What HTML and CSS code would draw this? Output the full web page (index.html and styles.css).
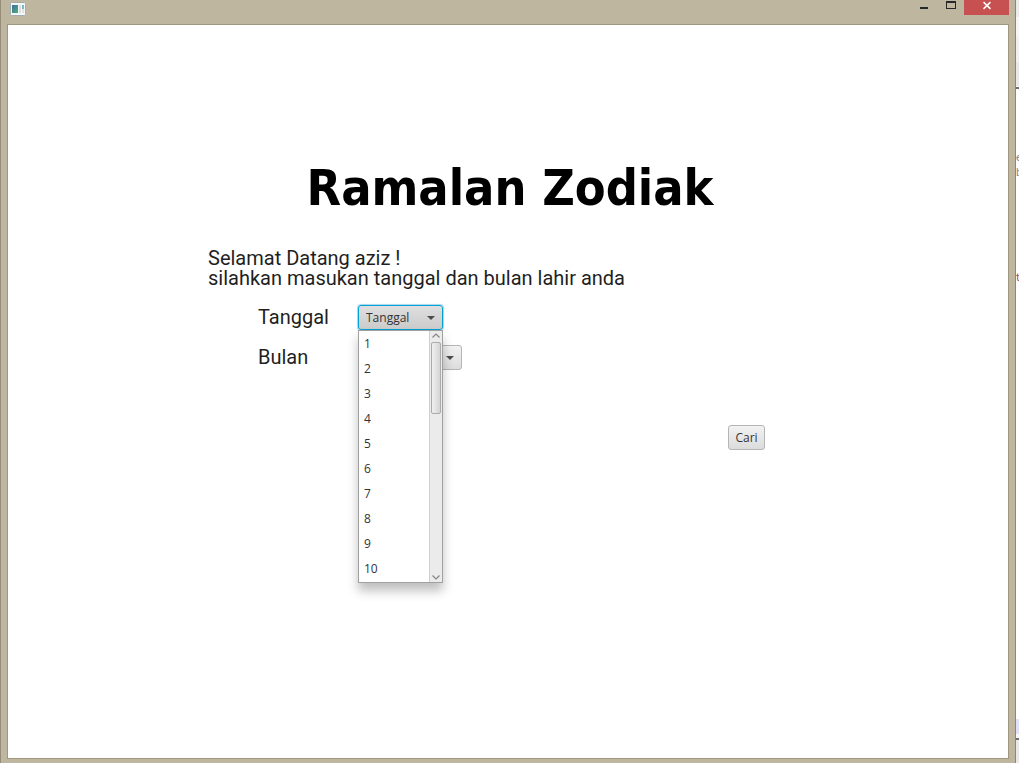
FILE: index.html
```html
<!DOCTYPE html>
<html lang="id">
<head>
<meta charset="utf-8">
<title>Ramalan Zodiak</title>
<link rel="stylesheet" href="styles.css">
</head>
<body>
<div class="desktop">
  <div class="window">
    <header class="titlebar">
      <svg class="app-icon" width="16" height="14" viewBox="0 0 16 14" aria-hidden="true">
        <defs>
          <linearGradient id="pane" x1="0" y1="0" x2="1" y2="1">
            <stop offset="0" stop-color="#3f6f9c"/><stop offset="1" stop-color="#4fae78"/>
          </linearGradient>
        </defs>
        <rect x=".5" y=".5" width="15" height="13" rx="1" fill="#f4f7f8" stroke="#a5acb0"/>
        <rect x="2" y="3" width="6" height="8" fill="url(#pane)"/>
        <rect x="9" y="3" width="2" height="8" fill="#dedede"/>
        <rect x="12" y="3" width="2" height="4" fill="#7fb4cf"/>
        <rect x="12" y="7" width="2" height="4" fill="#e2e2e2"/>
      </svg>
      <div class="window-buttons">
        <button class="window-button" type="button" aria-label="Minimize">
          <svg width="8" height="15" viewBox="0 0 8 15"><path d="M0 7h8v2H0z" fill="#26282a"/></svg>
        </button>
        <button class="window-button" type="button" aria-label="Maximize">
          <svg width="10" height="15" viewBox="0 0 10 15"><path d="M0 1h10v8H0zM1 3v5h8V3z" fill="#26282a" fill-rule="evenodd"/></svg>
        </button>
        <button class="window-button close" type="button" aria-label="Close">
          <svg width="8" height="15" viewBox="0 0 8 15"><path d="M.5 2.200l7 6.600M7.500 2.200l-7 6.600" stroke="#fff" stroke-width="1.6"/></svg>
        </button>
      </div>
    </header>
    <main class="scene">
      <h1 class="heading">Ramalan Zodiak</h1>
      <form class="form">
        <p class="intro">Selamat Datang aziz !<br>silahkan masukan tanggal dan bulan lahir anda</p>
        <div class="field">
          <label class="field-label" for="tanggal">Tanggal</label>
          <div class="combo combo-date focused">
            <select class="combo-select" id="tanggal"><option>Tanggal</option></select>
            <svg class="combo-arrow" width="8" height="4" viewBox="0 0 8 4"><path d="M0 0h8L4 4z" fill="#4c4c4c"/></svg>
            <div class="popup">
              <ul class="popup-list">
                <li>1</li><li>2</li><li>3</li><li>4</li><li>5</li>
                <li>6</li><li>7</li><li>8</li><li>9</li><li>10</li>
              </ul>
              <div class="scrollbar">
                <svg class="scroll-arrow" width="8" height="5" viewBox="0 0 8 5"><path d="M.5 4.500L4 1l3.500 3.500" fill="none" stroke="#858585" stroke-width="1.2"/></svg>
                <div class="scroll-track"><div class="scroll-thumb"></div></div>
                <svg class="scroll-arrow" width="8" height="5" viewBox="0 0 8 5"><path d="M.5 .5L4 4 7.500 .5" fill="none" stroke="#858585" stroke-width="1.2"/></svg>
              </div>
            </div>
          </div>
        </div>
        <div class="field">
          <label class="field-label" for="bulan">Bulan</label>
          <div class="combo combo-month">
            <select class="combo-select" id="bulan"><option>Bulan</option></select>
            <svg class="combo-arrow" width="8" height="4" viewBox="0 0 8 4"><path d="M0 0h8L4 4z" fill="#4c4c4c"/></svg>
          </div>
        </div>
        <div class="actions">
          <button class="search" type="button">Cari</button>
        </div>
      </form>
    </main>
  </div>
  <div class="behind" aria-hidden="true">
    <div class="behind-tools"></div>
    <div class="behind-page">
      <span>e</span><span>b</span><span class="code">t</span>
    </div>
    <div class="behind-tab"></div>
    <div class="behind-foot"></div>
  </div>
</div>
</body>
</html>
```
FILE: styles.css
```css
* { box-sizing: border-box; }

body {
  margin: 0;
  background: #fff;
  color: #1f1f1f;
  font-family: Roboto, "Noto Sans", sans-serif;
}

.desktop {
  display: flex;
  min-height: 100vh;
}

.window {
  flex: 1;
  display: flex;
  flex-direction: column;
  padding: 0 6px 4px;
  background: #bfb6a0;
  border-left: 1px solid #958d79;
  border-right: 1px solid #8d8674;
}

.titlebar {
  display: flex;
  justify-content: space-between;
  height: 24px;
  padding-left: 3px;
}

.app-icon { margin-top: 2px; }

.window-buttons { display: flex; height: 15px; }

.window-button {
  display: flex;
  justify-content: center;
  width: 27px;
  padding: 0;
  border: 0;
  background: none;
}

.window-button.close {
  width: 45px;
  background: #c75050;
}

.scene {
  flex: 1;
  padding-top: 130px;
  background: #fff;
  border: 1px solid #9f967f;
}

.heading {
  margin: 0 0 26px;
  padding-left: 4px;
  color: #000;
  font-family: "DejaVu Sans Condensed", "Noto Sans", sans-serif;
  font-size: 50px;
  line-height: 67px;
  text-align: center;
}

.form {
  width: 600px;
  max-width: 100%;
  margin: 0 auto;
}

.intro {
  margin: 0 0 17px;
  font-size: 20px;
  line-height: 20px;
}

.field {
  display: flex;
  align-items: center;
  margin-bottom: 15px;
  padding-left: 50px;
}

.field-label {
  width: 100px;
  font-size: 20px;
  line-height: 25px;
}

.combo {
  position: relative;
  height: 25px;
}

.combo-date { width: 85px; }
.combo-month { width: 104px; }

.combo-select,
.search {
  height: 25px;
  border: 1px solid #b5b5b5;
  border-radius: 3px;
  background: linear-gradient(#f2f2f2, #dcdcdc);
  color: #333;
  font-family: "Open Sans", "Noto Sans", sans-serif;
  font-size: 12px;
}

.combo-select {
  width: 100%;
  padding: 0 7px;
  appearance: none;
}

.focused .combo-select {
  border-color: #039ed3;
  background: linear-gradient(#dfdfdf, #cbcbcb);
  box-shadow: 0 0 1px 1px #9fd8ee;
}

.combo-arrow {
  position: absolute;
  top: 11px;
  right: 8px;
  pointer-events: none;
}

.popup {
  position: absolute;
  top: 25px;
  left: 0;
  z-index: 1;
  display: flex;
  width: 100%;
  border: 1px solid #a0a0a0;
  background: #fff;
  box-shadow: 0 8px 10px rgba(0, 0, 0, .25);
}

.popup-list {
  flex: 1;
  margin: 0;
  padding: 0 0 1px 5px;
  list-style: none;
  color: #333;
  font-family: "Open Sans", "Noto Sans", sans-serif;
  font-size: 12px;
  line-height: 25px;
}

.scrollbar {
  display: flex;
  flex-direction: column;
  width: 13px;
  border-left: 1px solid #cfcfcf;
  background: #ebebeb;
}

.scroll-arrow { margin: 2px; }

.scroll-track { flex: 1; }

.scroll-thumb {
  width: 10px;
  height: 72px;
  margin: 2px 1px;
  border: 1px solid #ababab;
  border-radius: 2px;
  background: linear-gradient(90deg, #f0f0f0, #d4d4d4);
}

.actions {
  display: flex;
  justify-content: flex-end;
  padding: 40px 43px 0 0;
}

.search {
  width: 37px;
  padding: 0;
}

.behind {
  display: flex;
  flex-direction: column;
  width: 3px;
  overflow: hidden;
  background: #fff;
}

.behind-tools {
  height: 89px;
  border-bottom: 2px solid #707070;
  background: linear-gradient(#ebebeb 17px, #f5f5f5 17px 36px, #f0f0f0 36px 62px, #e8e8e8 62px 86px, #fafafa 86px);
}

.behind-page {
  flex: 1;
  padding-top: 61px;
  color: #888;
  font-size: 11px;
}

.behind-page span {
  display: block;
  line-height: 15px;
}

.behind-page .code {
  margin-top: 90px;
  color: #b05040;
}

.behind-tab {
  height: 21px;
  border-bottom: 2px solid #707070;
  background: linear-gradient(#e0e0f8 15px, #fafafa 15px);
}

.behind-foot {
  height: 23px;
  background: #e8e8e8;
}
```
